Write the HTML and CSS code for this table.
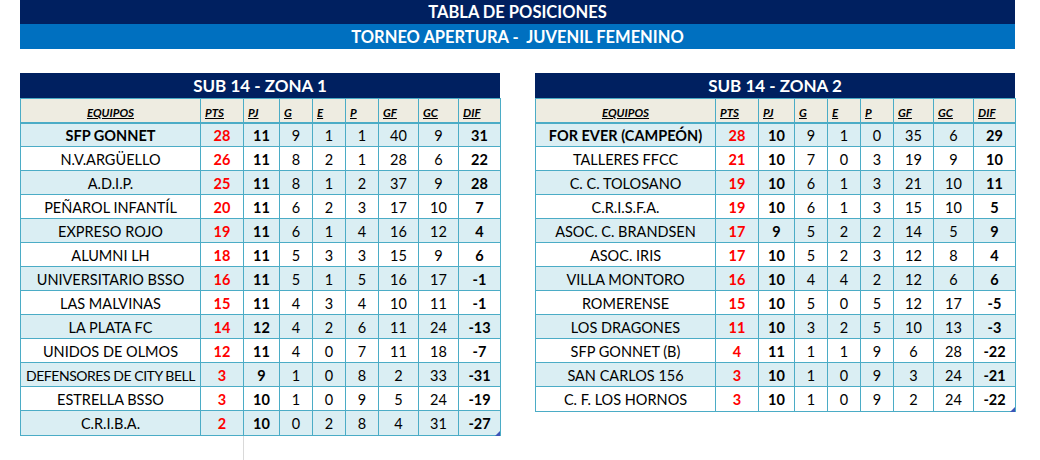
FILE: index.html
```html
<!DOCTYPE html>
<html lang="es">
<head>
<meta charset="utf-8">
<title>Tabla de posiciones</title>
<link rel="stylesheet" href="styles.css">
</head>
<body>
<div class="page">
  <div class="banner banner-main">TABLA DE POSICIONES</div>
  <div class="banner banner-sub">TORNEO APERTURA -&nbsp; JUVENIL FEMENINO</div>

  <div class="zones">
    <div class="zone-col">
      <div class="zone">
        <div class="zone-title">SUB 14 - ZONA 1</div>
        <table class="standings">
          <colgroup>
            <col class="c-team"><col class="c-pts"><col class="c-pj"><col class="c-n"><col class="c-n"><col class="c-n"><col class="c-g"><col class="c-g"><col class="c-dif">
          </colgroup>
          <thead>
            <tr><th class="h-team">EQUIPOS</th><th>PTS</th><th>PJ</th><th>G</th><th>E</th><th>P</th><th>GF</th><th>GC</th><th>DIF</th></tr>
          </thead>
          <tbody>
            <tr><td class="team lead">SFP GONNET</td><td class="pts">28</td><td class="pj">11</td><td>9</td><td>1</td><td>1</td><td>40</td><td>9</td><td class="dif">31</td></tr>
            <tr><td class="team">N.V.ARGÜELLO</td><td class="pts">26</td><td class="pj">11</td><td>8</td><td>2</td><td>1</td><td>28</td><td>6</td><td class="dif">22</td></tr>
            <tr><td class="team">A.D.I.P.</td><td class="pts">25</td><td class="pj">11</td><td>8</td><td>1</td><td>2</td><td>37</td><td>9</td><td class="dif">28</td></tr>
            <tr><td class="team">PEÑAROL INFANTÍL</td><td class="pts">20</td><td class="pj">11</td><td>6</td><td>2</td><td>3</td><td>17</td><td>10</td><td class="dif">7</td></tr>
            <tr><td class="team">EXPRESO ROJO</td><td class="pts">19</td><td class="pj">11</td><td>6</td><td>1</td><td>4</td><td>16</td><td>12</td><td class="dif">4</td></tr>
            <tr><td class="team">ALUMNI LH</td><td class="pts">18</td><td class="pj">11</td><td>5</td><td>3</td><td>3</td><td>15</td><td>9</td><td class="dif">6</td></tr>
            <tr><td class="team">UNIVERSITARIO BSSO</td><td class="pts">16</td><td class="pj">11</td><td>5</td><td>1</td><td>5</td><td>16</td><td>17</td><td class="dif">-1</td></tr>
            <tr><td class="team">LAS MALVINAS</td><td class="pts">15</td><td class="pj">11</td><td>4</td><td>3</td><td>4</td><td>10</td><td>11</td><td class="dif">-1</td></tr>
            <tr><td class="team">LA PLATA FC</td><td class="pts">14</td><td class="pj">12</td><td>4</td><td>2</td><td>6</td><td>11</td><td>24</td><td class="dif">-13</td></tr>
            <tr><td class="team">UNIDOS DE OLMOS</td><td class="pts">12</td><td class="pj">11</td><td>4</td><td>0</td><td>7</td><td>11</td><td>18</td><td class="dif">-7</td></tr>
            <tr><td class="team tight">DEFENSORES DE CITY BELL</td><td class="pts">3</td><td class="pj">9</td><td>1</td><td>0</td><td>8</td><td>2</td><td>33</td><td class="dif">-31</td></tr>
            <tr><td class="team">ESTRELLA BSSO</td><td class="pts">3</td><td class="pj">10</td><td>1</td><td>0</td><td>9</td><td>5</td><td>24</td><td class="dif">-19</td></tr>
            <tr><td class="team">C.R.I.B.A.</td><td class="pts">2</td><td class="pj">10</td><td>0</td><td>2</td><td>8</td><td>4</td><td>31</td><td class="dif">-27</td></tr>
          </tbody>
        </table>
      </div>
      <div class="grid-stub"></div>
    </div>

    <div class="zone-col">
      <div class="zone">
        <div class="zone-title">SUB 14 - ZONA 2</div>
        <table class="standings">
          <colgroup>
            <col class="c-team"><col class="c-pts"><col class="c-pj"><col class="c-n"><col class="c-n"><col class="c-n"><col class="c-g"><col class="c-g"><col class="c-dif">
          </colgroup>
          <thead>
            <tr><th class="h-team">EQUIPOS</th><th>PTS</th><th>PJ</th><th>G</th><th>E</th><th>P</th><th>GF</th><th>GC</th><th>DIF</th></tr>
          </thead>
          <tbody>
            <tr><td class="team lead">FOR EVER (CAMPEÓN)</td><td class="pts">28</td><td class="pj">10</td><td>9</td><td>1</td><td>0</td><td>35</td><td>6</td><td class="dif">29</td></tr>
            <tr><td class="team">TALLERES FFCC</td><td class="pts">21</td><td class="pj">10</td><td>7</td><td>0</td><td>3</td><td>19</td><td>9</td><td class="dif">10</td></tr>
            <tr><td class="team">C. C. TOLOSANO</td><td class="pts">19</td><td class="pj">10</td><td>6</td><td>1</td><td>3</td><td>21</td><td>10</td><td class="dif">11</td></tr>
            <tr><td class="team">C.R.I.S.F.A.</td><td class="pts">19</td><td class="pj">10</td><td>6</td><td>1</td><td>3</td><td>15</td><td>10</td><td class="dif">5</td></tr>
            <tr><td class="team">ASOC. C. BRANDSEN</td><td class="pts">17</td><td class="pj">9</td><td>5</td><td>2</td><td>2</td><td>14</td><td>5</td><td class="dif">9</td></tr>
            <tr><td class="team">ASOC. IRIS</td><td class="pts">17</td><td class="pj">10</td><td>5</td><td>2</td><td>3</td><td>12</td><td>8</td><td class="dif">4</td></tr>
            <tr><td class="team">VILLA MONTORO</td><td class="pts">16</td><td class="pj">10</td><td>4</td><td>4</td><td>2</td><td>12</td><td>6</td><td class="dif">6</td></tr>
            <tr><td class="team">ROMERENSE</td><td class="pts">15</td><td class="pj">10</td><td>5</td><td>0</td><td>5</td><td>12</td><td>17</td><td class="dif">-5</td></tr>
            <tr><td class="team">LOS DRAGONES</td><td class="pts">11</td><td class="pj">10</td><td>3</td><td>2</td><td>5</td><td>10</td><td>13</td><td class="dif">-3</td></tr>
            <tr><td class="team">SFP GONNET (B)</td><td class="pts">4</td><td class="pj">11</td><td>1</td><td>1</td><td>9</td><td>6</td><td>28</td><td class="dif">-22</td></tr>
            <tr><td class="team">SAN CARLOS 156</td><td class="pts">3</td><td class="pj">10</td><td>1</td><td>0</td><td>9</td><td>3</td><td>24</td><td class="dif">-21</td></tr>
            <tr><td class="team">C. F. LOS HORNOS</td><td class="pts">3</td><td class="pj">10</td><td>1</td><td>0</td><td>9</td><td>2</td><td>24</td><td class="dif">-22</td></tr>
          </tbody>
        </table>
      </div>
    </div>
  </div>
</div>
</body>
</html>
```

FILE: styles.css
```css
* { box-sizing: border-box; }

body {
  margin: 0;
  background: #ffffff;
  font-family: Lato, "Liberation Sans", Arial, sans-serif;
  color: #000000;
}

.page {
  width: 1015px;
  padding-left: 20px;
}

.banner {
  color: #ffffff;
  font-weight: bold;
  text-align: center;
  font-size: 16.5px;
}

.banner-main {
  background: #002060;
  height: 24px;
  line-height: 25px;
}

.banner-sub {
  background: #0070c0;
  height: 25px;
  line-height: 26px;
}

.zones {
  display: flex;
  gap: 35px;
  align-items: flex-start;
  margin-top: 24px;
}

.zone-col {
  width: 480px;
}

.zone {
  position: relative;
  width: 480px;
}

.zone::after {
  content: "";
  position: absolute;
  right: 0;
  bottom: 0;
  width: 0;
  height: 0;
  border-left: 5px solid transparent;
  border-bottom: 5px solid #3d55b8;
}

.zone-title {
  background: #002060;
  color: #ffffff;
  height: 25px;
  line-height: 26px;
  text-align: center;
  font-weight: bold;
  font-size: 17px;
}

.standings {
  width: 480px;
  table-layout: fixed;
  border-collapse: collapse;
  font-size: 14.5px;
}

.c-team { width: 180px; }
.c-pts { width: 43px; }
.c-pj { width: 36px; }
.c-n { width: 33px; }
.c-g { width: 40px; }
.c-dif { width: 42px; }

.standings th,
.standings td {
  border: 1px solid #4bacc6;
  padding: 0;
  white-space: nowrap;
  overflow: hidden;
}

.standings thead tr {
  height: 24px;
}

.standings th {
  background: #eeece1;
  font-size: 11.5px;
  font-style: italic;
  font-weight: bold;
  text-decoration: underline;
  text-align: left;
  vertical-align: bottom;
  padding: 0 0 3px 4px;
  border-bottom-width: 2px;
}

.standings th.h-team {
  text-align: center;
  padding-left: 0;
}

.standings tbody tr {
  height: 24px;
}

.standings tbody tr:last-child {
  height: 25px;
}

.standings tbody tr:nth-child(odd) td {
  background: #daeef3;
}

.standings tbody tr:nth-child(even) td {
  background: #ffffff;
}

.standings td {
  text-align: center;
  vertical-align: middle;
  padding-top: 1px;
}

.standings td.tight {
  font-size: 14px;
  letter-spacing: -0.45px;
  text-overflow: clip;
}

.standings td.lead {
  font-weight: bold;
}

.standings td.pts {
  color: #ff0000;
  font-weight: bold;
}

.standings td.pj,
.standings td.dif {
  font-weight: bold;
}

.grid-stub {
  margin-left: 223px;
  width: 1px;
  height: 30px;
  background: #d9d9d9;
}
```
